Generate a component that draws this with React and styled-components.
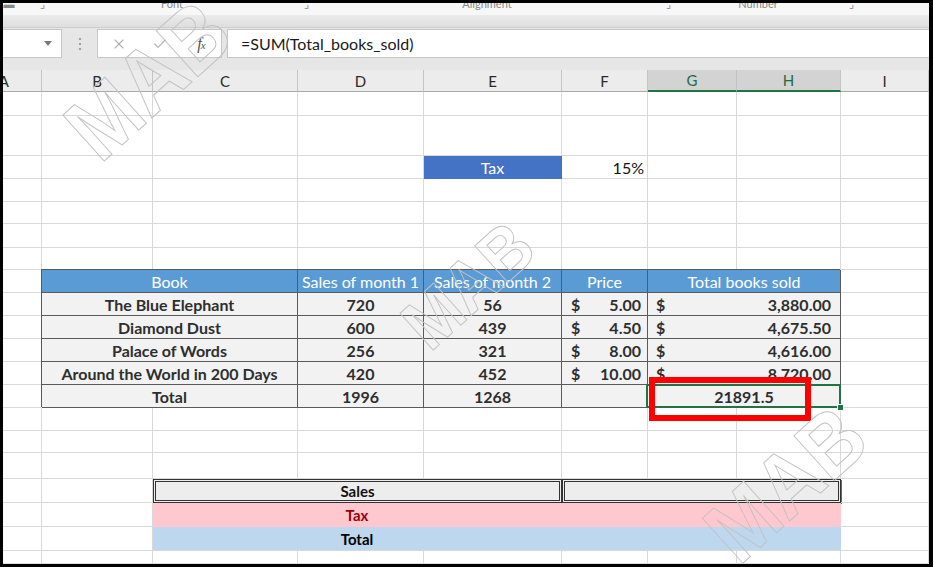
import React from 'react';
import styled, { createGlobalStyle } from 'styled-components';
import { X, Check } from 'lucide-react';

const COLS = [39, 111, 145, 126, 138, 86, 89, 104, 88];
const ROW_H = [24, 40, 23, 23, 22, 24, 22, 23, 23, 23, 23, 23, 23, 23, 22, 26, 24, 24, 24, 13];
const LETTERS = ['A', 'B', 'C', 'D', 'E', 'F', 'G', 'H', 'I'];

const Global = createGlobalStyle`
  html, body { margin: 0; padding: 0; background: #fff; }
  body { font-family: "Lato", "Liberation Sans", sans-serif; }
`;

const Frame = styled.div`
  position: relative;
  width: 933px;
  height: 567px;
  box-sizing: border-box;
  border: 3px solid #000;
  border-right-width: 4px;
  overflow: hidden;
  display: flex;
  flex-direction: column;
  background: #fff;
`;

const RibbonStrip = styled.div`
  height: 12px;
  flex: none;
  background: #f7f7f7;
  overflow: hidden;
  display: flex;
`;

const RibbonItem = styled.div`
  width: ${p => p.$w}px;
  flex: none;
  text-align: center;
  font-size: 11px;
  line-height: 12px;
  color: #888;
  transform: translateY(-5px);
  white-space: nowrap;
`;

const RibbonBand = styled.div`
  height: 13px;
  flex: none;
  box-sizing: border-box;
  background: linear-gradient(#ebebeb, #dedede);
  border-bottom: 1px solid #cdcdcd;
`;

const FormulaBar = styled.div`
  height: 42px;
  flex: none;
  box-sizing: border-box;
  background: #e6e6e6;
  display: flex;
  align-items: flex-start;
  padding-top: 1px;
`;

const NameBox = styled.div`
  width: 59px;
  height: 29px;
  box-sizing: border-box;
  background: #fff;
  border: 1px solid #c6c6c6;
  border-left: none;
  display: flex;
  align-items: center;
  justify-content: flex-end;
  padding-right: 9px;
`;

const DropArrow = styled.span`
  width: 0;
  height: 0;
  border-left: 4px solid transparent;
  border-right: 4px solid transparent;
  border-top: 5px solid #7a7a7a;
`;

const Grip = styled.div`
  width: 35px;
  height: 29px;
  display: flex;
  flex-direction: column;
  align-items: center;
  justify-content: center;
  gap: 3px;
`;

const GripDot = styled.span`
  width: 2px;
  height: 2px;
  background: #a0a0a0;
`;

const FxBox = styled.div`
  width: 125px;
  height: 29px;
  box-sizing: border-box;
  background: #fff;
  border: 1px solid #c6c6c6;
  display: grid;
  grid-template-columns: 42px 39px 44px;
  align-items: center;
  justify-items: center;
  color: #b0b0b0;
`;

const FxLabel = styled.span`
  font-family: "Liberation Serif", serif;
  font-style: italic;
  font-size: 16px;
  color: #555;
  letter-spacing: -1px;
  & small { font-size: 11px; }
`;

const FormulaInput = styled.div`
  flex: 1;
  height: 29px;
  margin-left: 5px;
  box-sizing: border-box;
  background: #fff;
  border: 1px solid #c6c6c6;
  border-right: none;
  padding-left: 13px;
  display: flex;
  align-items: center;
  font-size: 16px;
  color: #1a1a1a;
`;

const Sheet = styled.div`
  display: grid;
  grid-template-columns: ${COLS.map(c => c + 'px').join(' ')};
  grid-template-rows: 22px ${ROW_H.map(h => h + 'px').join(' ')};
  font-family: "Lato", "Liberation Sans", sans-serif;
`;

const Cell = styled.div`
  grid-column: span ${p => p.$span || 1};
  box-sizing: border-box;
  min-width: 0;
  border-right: 1px solid #d9d9d9;
  border-bottom: 1px solid #d9d9d9;
  display: flex;
  align-items: center;
  overflow: hidden;
  white-space: nowrap;
`;

const ColHead = styled(Cell)`
  background: ${p => (p.$sel ? '#d3d3d3' : '#ececec')};
  border-right-color: #c3c3c3;
  border-bottom: ${p => (p.$sel ? '2px solid #217346' : '1px solid #ababab')};
  color: ${p => (p.$sel ? '#1f6b42' : '#2a2a2a')};
  justify-content: ${p => (p.$clip ? 'flex-end' : 'center')};
  padding-right: ${p => (p.$clip ? '32px' : '0')};
  font-size: 15px;
`;

const TaxLabel = styled(Cell)`
  background: #4472c4;
  border-color: transparent;
  color: #fff;
  justify-content: center;
  font-size: 16px;
`;

const PercentCell = styled(Cell)`
  justify-content: flex-end;
  padding-right: 3px;
  font-size: 16px;
  color: #111;
`;

const THead = styled(Cell)`
  background: #5b9bd5;
  color: #fff;
  justify-content: center;
  font-size: 16px;
  border-right: 1px solid #5a5a5a;
  border-bottom: 1px solid #5a5a5a;
  box-shadow: -1px -1px 0 #5a5a5a;
`;

const TCell = styled(Cell)`
  background: #f2f2f2;
  color: #2e2e2e;
  font-weight: 700;
  font-size: 16px;
  justify-content: center;
  border-right: 1px solid #5a5a5a;
  border-bottom: 1px solid #5a5a5a;
  box-shadow: -1px -1px 0 #5a5a5a;
`;

const MoneyCell = styled(TCell)`
  justify-content: space-between;
  padding: 0 ${p => p.$pr}px 0 ${p => p.$pl}px;
`;

const SelectedCell = styled(TCell)`
  position: relative;
  z-index: 2;
  overflow: visible;
`;

const SelectionFrame = styled.span`
  position: absolute;
  inset: -1px -1px -1px -2px;
  border: 2px solid #217346;
  pointer-events: none;
`;

const FillHandle = styled.span`
  position: absolute;
  right: -4px;
  bottom: -4px;
  width: 5px;
  height: 5px;
  background: #217346;
  border: 1px solid #fff;
`;

const Highlight = styled.span`
  position: absolute;
  left: 1px;
  top: -8px;
  width: 162px;
  height: 44px;
  box-sizing: border-box;
  border: 6px solid #ff0000;
  pointer-events: none;
`;

const SalesBox = styled(Cell)`
  background: #ededed;
  border: 3px double #333;
  box-shadow: 1px 1px 0 #666;
  justify-content: center;
  font-weight: 700;
  font-size: 15px;
  color: #111;
`;

const BandCell = styled(Cell)`
  background: ${p => p.$bg};
  border-right-color: transparent;
  border-bottom-color: ${p => p.$line || 'transparent'};
  color: ${p => p.$fg};
  justify-content: center;
  font-weight: 700;
  font-size: 15px;
`;

const Watermark = styled.div`
  position: absolute;
  left: ${p => p.$x - 3}px;
  top: ${p => p.$y - 3}px;
  transform: translate(-50%, -50%) rotate(-42deg) scaleX(0.9);
  font-family: "Liberation Sans", sans-serif;
  font-weight: 700;
  font-size: ${p => p.$size}px;
  line-height: 1;
  color: transparent;
  -webkit-text-stroke: 1px #c2c2c2;
  white-space: nowrap;
  pointer-events: none;
  z-index: 5;
`;

const books = [
  ['The Blue Elephant', '720', '56', '5.00', '3,880.00'],
  ['Diamond Dust', '600', '439', '4.50', '4,675.50'],
  ['Palace of Words', '256', '321', '8.00', '4,616.00'],
  ['Around the World in 200 Days', '420', '452', '10.00', '8,720.00'],
];

const blanks = (n, prefix) => Array.from({ length: n }, (_, i) => <Cell key={prefix + i} />);

function Row({ r }) {
  if (r === 3) {
    return (
      <>
        {blanks(4, 'a')}
        <TaxLabel>Tax</TaxLabel>
        <PercentCell>15%</PercentCell>
        {blanks(3, 'b')}
      </>
    );
  }
  if (r === 8) {
    return (
      <>
        <Cell />
        <THead $span={2}>Book</THead>
        <THead>Sales of month 1</THead>
        <THead>Sales of month 2</THead>
        <THead>Price</THead>
        <THead $span={2}>Total books sold</THead>
        <Cell />
      </>
    );
  }
  if (r >= 9 && r <= 12) {
    const [name, m1, m2, price, total] = books[r - 9];
    return (
      <>
        <Cell />
        <TCell $span={2}>{name}</TCell>
        <TCell>{m1}</TCell>
        <TCell>{m2}</TCell>
        <MoneyCell $pl={9} $pr={6}>
          <span>$</span>
          <span>{price}</span>
        </MoneyCell>
        <MoneyCell $span={2} $pl={8} $pr={9}>
          <span>$</span>
          <span>{total}</span>
        </MoneyCell>
        <Cell />
      </>
    );
  }
  if (r === 13) {
    return (
      <>
        <Cell />
        <TCell $span={2}>Total</TCell>
        <TCell>1996</TCell>
        <TCell>1268</TCell>
        <TCell />
        <SelectedCell $span={2}>
          21891.5
          <SelectionFrame />
          <FillHandle />
          <Highlight />
        </SelectedCell>
        <Cell />
      </>
    );
  }
  if (r === 17) {
    return (
      <>
        {blanks(2, 'a')}
        <SalesBox $span={3}>Sales</SalesBox>
        <SalesBox $span={3} />
        <Cell />
      </>
    );
  }
  if (r === 18 || r === 19) {
    const pink = r === 18;
    const bg = pink ? '#ffc7ce' : '#bdd7ee';
    const fg = pink ? '#9c0006' : '#000';
    const line = pink ? undefined : '#d9d9d9';
    return (
      <>
        {blanks(2, 'a')}
        <BandCell $span={3} $bg={bg} $fg={fg} $line={line}>{pink ? 'Tax' : 'Total'}</BandCell>
        <BandCell $span={3} $bg={bg} $fg={fg} $line={line} />
        <Cell />
      </>
    );
  }
  return <>{blanks(9, 'x')}</>;
}

export default function App() {
  return (
    <>
      <Global />
      <Frame>
        <RibbonStrip>
          <RibbonItem $w={12}>▬</RibbonItem>
          <RibbonItem $w={54}>⌟</RibbonItem>
          <RibbonItem $w={206}>Font</RibbonItem>
          <RibbonItem $w={62}>⌟</RibbonItem>
          <RibbonItem $w={300}>Alignment</RibbonItem>
          <RibbonItem $w={62}>⌟</RibbonItem>
          <RibbonItem $w={118}>Number</RibbonItem>
          <RibbonItem $w={68}>⌟</RibbonItem>
        </RibbonStrip>
        <RibbonBand />
        <FormulaBar>
          <NameBox>
            <DropArrow />
          </NameBox>
          <Grip>
            <GripDot />
            <GripDot />
            <GripDot />
          </Grip>
          <FxBox>
            <X size={16} strokeWidth={1.6} />
            <Check size={16} strokeWidth={1.6} />
            <FxLabel>
              f<small>x</small>
            </FxLabel>
          </FxBox>
          <FormulaInput>=SUM(Total_books_sold)</FormulaInput>
        </FormulaBar>
        <Sheet>
          {LETTERS.map((l, i) => (
            <ColHead key={l} $clip={i === 0} $sel={i === 6 || i === 7}>
              {l}
            </ColHead>
          ))}
          {ROW_H.map((_, i) => (
            <Row key={i} r={i + 1} />
          ))}
        </Sheet>
        <Watermark $x={148} $y={80} $size={90}>MAB</Watermark>
        <Watermark $x={468} $y={285} $size={72}>MAB</Watermark>
        <Watermark $x={786} $y={484} $size={88}>MAB</Watermark>
      </Frame>
    </>
  );
}
